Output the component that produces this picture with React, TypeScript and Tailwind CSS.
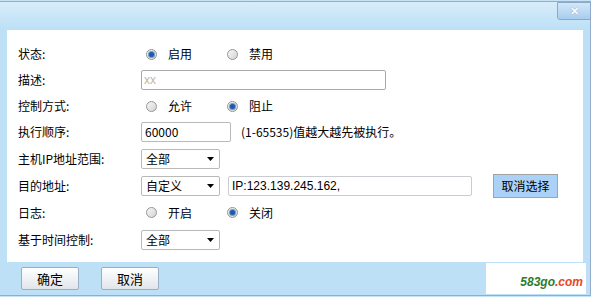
const cjk = { fontFamily: '"Noto Sans CJK SC", "Liberation Sans", sans-serif' };
const latin = { fontFamily: '"Liberation Sans", Arial, sans-serif' };

function Radio({ checked }: { checked?: boolean }) {
  return (
    <span className="flex h-[11px] w-[11px] shrink-0 items-center justify-center rounded-full border border-[#959595] bg-gradient-to-br from-[#f7f7f7] to-[#d4d4d4]">
      {checked && <span className="h-[5px] w-[5px] rounded-full bg-[#1b5cab] shadow-[0_0_0_1px_#6e9bd0]" />}
    </span>
  );
}

function RadioGroup({ options, value }: { options: string[]; value: number }) {
  return (
    <div className="flex items-center pl-[5px]">
      {options.map((o, i) => (
        <div key={o} className="flex w-[81px] items-center gap-[11px]">
          <Radio checked={i === value} />
          <span>{o}</span>
        </div>
      ))}
    </div>
  );
}

function Select({ label }: { label: string }) {
  return (
    <div className="flex h-[20px] w-[79px] items-center justify-between rounded-[2px] border border-[#b9b9b9] bg-white pl-[4px] pr-[5px]">
      <span>{label}</span>
      <svg width="7" height="4" viewBox="0 0 7 4">
        <path d="M0 0h7L3.5 4z" fill="#000" />
      </svg>
    </div>
  );
}

function Row({ label, h = 26, children }: { label: string; h?: number; children: React.ReactNode }) {
  return (
    <div className={`flex items-center ${h === 26 ? "h-[26px]" : "h-[27px]"}`}>
      <div className="w-[123px] shrink-0">{label}</div>
      {children}
    </div>
  );
}

export default function App() {
  return (
    <div className="h-[297px] w-[591px] bg-[#c6e3f6] pt-[1px] text-[12px] text-black" style={cjk}>
      <div className="relative h-[295px] border-t border-r border-b border-[#97abcb] bg-[#bde0f6]">
        <div className="h-[28px] bg-gradient-to-b from-[#d9ecfa] to-[#bbe0f6]" />
        <div className="absolute right-[-1px] top-0 flex h-[18px] w-[34px] items-center justify-center rounded-bl-[3px] border border-[#8ea8cc] bg-gradient-to-b from-[#d3e7f8] to-[#a8cdef]">
          <span className="text-[11px] font-bold leading-none text-white [text-shadow:0_0_1px_#6b86a8]" style={latin}>
            ✕
          </span>
        </div>

        <div className="ml-[7px] h-[232px] w-[576px] bg-white pl-[11px] pt-[11px]">
          <Row label="状态:">
            <RadioGroup options={["启用", "禁用"]} value={0} />
          </Row>
          <Row label="描述:">
            <div className="flex h-[20px] w-[245px] items-center rounded-[2px] border border-[#a9a9a9] px-[2px] text-[#c2b795]" style={latin}>
              xx
            </div>
          </Row>
          <Row label="控制方式:">
            <RadioGroup options={["允许", "阻止"]} value={1} />
          </Row>
          <Row label="执行顺序:">
            <div className="flex h-[20px] w-[90px] items-center rounded-[2px] border border-[#b9b9b9] px-[3px]">
              60000
            </div>
            <span className="ml-[10px]">(1-65535)值越大越先被执行。</span>
          </Row>
          <Row label="主机IP地址范围:" h={27}>
            <Select label="全部" />
          </Row>
          <Row label="目的地址:" h={27}>
            <Select label="自定义" />
            <div className="ml-[8px] flex h-[20px] w-[244px] items-center rounded-[2px] border border-[#c9ccd1] px-[3px] text-[12px]" style={latin}>
              IP:123.139.245.162,
            </div>
            <button className="ml-[21px] h-[24px] w-[65px] border border-[#a3a3a3] bg-[#abd1f6] text-[12px]">取消选择</button>
          </Row>
          <Row label="日志:" h={27}>
            <RadioGroup options={["开启", "关闭"]} value={1} />
          </Row>
          <Row label="基于时间控制:" h={27}>
            <Select label="全部" />
          </Row>
        </div>

        <div className="flex gap-[22px] pl-[21px] pt-[5px]">
          <button className="h-[23px] w-[58px] rounded-[2px] border border-[#9aaec6] bg-gradient-to-b from-white to-[#e1e5ea] text-[13px]">确定</button>
          <button className="h-[23px] w-[58px] rounded-[2px] border border-[#9aaec6] bg-gradient-to-b from-white to-[#e1e5ea] text-[13px]">取消</button>
        </div>

        <div className="absolute left-[486px] top-[261px] flex h-[31px] w-[100px] items-end justify-end bg-white pb-[3px] pr-[3px]">
          <span className="text-[12px] font-bold italic" style={latin}>
            <span className="text-[#2a7d2e]">583go</span>
            <span className="text-[#e8461f]">.com</span>
          </span>
        </div>
      </div>
    </div>
  );
}
